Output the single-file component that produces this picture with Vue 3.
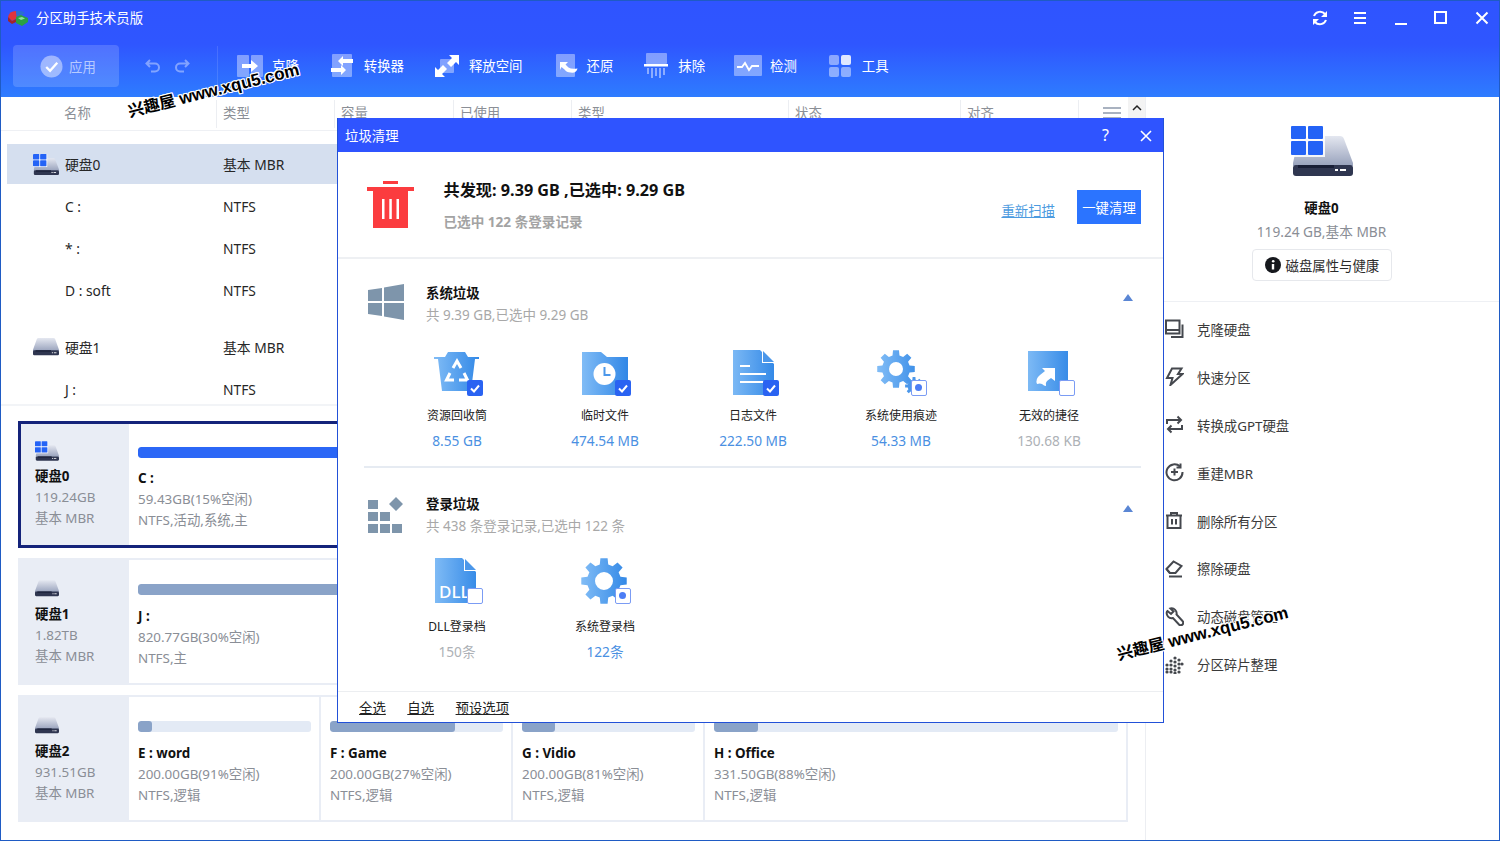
<script setup>
const columns = [
  { label: '名称', width: 215, first: true },
  { label: '类型', width: 118 },
  { label: '容量', width: 119 },
  { label: '已使用', width: 118 },
  { label: '类型', width: 217 },
  { label: '状态', width: 172 },
  { label: '对齐', width: 118 },
]

const rows = [
  { name: '硬盘0', type: '基本 MBR', icon: 'disk-win', selected: true },
  { name: 'C :', type: 'NTFS' },
  { name: '* :', type: 'NTFS' },
  { name: 'D : soft', type: 'NTFS' },
  { name: '硬盘1', type: '基本 MBR', icon: 'disk', gap: true },
  { name: 'J :', type: 'NTFS' },
]

const cards = [
  {
    name: '硬盘0', size: '119.24GB', icon: 'disk-win', selected: true,
    parts: [{ name: 'C :', size: '59.43GB(15%空闲)', info: 'NTFS,活动,系统,主', used: 100, color: 'blue', grow: 1 }],
  },
  {
    name: '硬盘1', size: '1.82TB', icon: 'disk',
    parts: [{ name: 'J :', size: '820.77GB(30%空闲)', info: 'NTFS,主', used: 100, grow: 1 }],
  },
  {
    name: '硬盘2', size: '931.51GB', icon: 'disk',
    parts: [
      { name: 'E : word', size: '200.00GB(91%空闲)', info: 'NTFS,逻辑', used: 8, width: 190 },
      { name: 'F : Game', size: '200.00GB(27%空闲)', info: 'NTFS,逻辑', used: 72, width: 192 },
      { name: 'G : Vidio', size: '200.00GB(81%空闲)', info: 'NTFS,逻辑', used: 19, width: 192 },
      { name: 'H : Office', size: '331.50GB(88%空闲)', info: 'NTFS,逻辑', used: 11, grow: 1 },
    ],
  },
]

const systemItems = [
  { label: '资源回收筒', value: '8.55 GB', icon: 'bin', state: 'checked' },
  { label: '临时文件', value: '474.54 MB', icon: 'folder', state: 'checked' },
  { label: '日志文件', value: '222.50 MB', icon: 'log', state: 'checked' },
  { label: '系统使用痕迹', value: '54.33 MB', icon: 'gears', state: 'partial' },
  { label: '无效的捷径', value: '130.68 KB', icon: 'shortcut', state: 'empty' },
]

const registryItems = [
  { label: 'DLL登录档', value: '150条', icon: 'dll', state: 'empty' },
  { label: '系统登录档', value: '122条', icon: 'gear', state: 'partial' },
]

const sections = [
  { title: '系统垃圾', sub: '共 9.39 GB,已选中 9.29 GB', icon: 'win', items: systemItems },
  { title: '登录垃圾', sub: '共 438 条登录记录,已选中 122 条', icon: 'blocks', items: registryItems },
]

const menu = [
  { label: '克隆硬盘', d: ['M1 1.500h13.500v13H1z', 'M1 11h13.500', 'M17.500 5.500v12.500H6'] },
  { label: '快速分区', d: ['M7 1.500h9.500L13 7h4.500L5.500 18 7.500 11H2z'] },
  { label: '转换成GPT硬盘', d: ['M2 9V5h14', 'M12.500 1.500L16 5l-3.500 3.500', 'M17 10v4H3', 'M6.500 10.500L3 14l3.500 3.500'] },
  { label: '重建MBR', d: ['M15 3.500A8 8 0 1 0 17.500 9', 'M15.500 .5v4h-4', 'M9.500 5.500v7', 'M6 9h7'] },
  { label: '删除所有分区', d: ['M1 4.500h16', 'M6 4.500V2h6v2.500', 'M2.500 4.500V17h13V4.500', 'M7 8v5.500', 'M11 8v5.500'] },
  { label: '擦除硬盘', d: ['M1.500 10l7-7.500 8 4.500-6 7H5z', 'M5 14.500l-3.500-4.500', 'M4 17.500h13'] },
  { label: '动态磁盘管理', d: ['M2.500 4l3.500 3 2.500-2.500L5.500 1.500a5 5 0 0 1 6 6l6 6.500a2.300 2.300 0 0 1-3.500 3.500l-6-6.500a5 5 0 0 1-6-6.500z'] },
  {
    label: '分区碎片整理',
    dots: true,
    d: ['M2 10h.01', 'M2 14h.01', 'M2 17h.01', 'M6 6h.01', 'M6 10h.01', 'M6 14h.01', 'M6 17h.01', 'M10 3h.01', 'M10 7h.01', 'M10 11h.01', 'M10 15h.01', 'M10 18h.01', 'M14 5h.01', 'M14 9h.01', 'M14 13h.01', 'M17 9h.01', 'M14 17h.01'],
  },
]

// builds a cog outline, used by the gear icons of the dialog
const gearPath = (cx, cy, outer, inner, hole, teeth = 8) => {
  const step = (Math.PI * 2) / teeth
  let d = ''
  for (let i = 0; i < teeth; i++) {
    const a = i * step - Math.PI / 2
    const pts = [
      [inner, a - step * 0.32],
      [outer, a - step * 0.2],
      [outer, a + step * 0.2],
      [inner, a + step * 0.32],
    ]
    pts.forEach(([r, t], j) => {
      const x = (cx + r * Math.cos(t)).toFixed(2)
      const y = (cy + r * Math.sin(t)).toFixed(2)
      d += `${i === 0 && j === 0 ? 'M' : 'L'}${x} ${y}`
    })
  }
  d += `Z M${cx - hole} ${cy}a${hole} ${hole} 0 1 0 ${hole * 2} 0a${hole} ${hole} 0 1 0 ${-hole * 2} 0Z`
  return d
}

const bigGear = gearPath(23, 23, 23, 17, 9)
const topGear = gearPath(19, 19, 19, 14, 7)
const smallGear = gearPath(37, 36, 9, 6.500, 0.01)
</script>

<template>
  <div class="app">
    <svg class="sprite" aria-hidden="true">
      <defs>
        <linearGradient id="bodyGrad" x1="0" y1="0" x2="0" y2="1">
          <stop offset="0" stop-color="#e4e7f0" />
          <stop offset="1" stop-color="#98a2bc" />
        </linearGradient>
        <linearGradient id="iconGrad" gradientUnits="userSpaceOnUse" x1="0" y1="0" x2="48" y2="0">
          <stop offset="0" stop-color="#82bdf6" />
          <stop offset="1" stop-color="#2f86e6" />
        </linearGradient>
      </defs>
      <symbol id="disk-win" viewBox="0 0 62 50">
        <path d="M8 10h41q3 0 4 3l9 24v3H2v-3z" fill="url(#bodyGrad)" />
        <rect x="2" y="39" width="60" height="11" rx="3" fill="#2f3650" />
        <rect x="7" y="39" width="36" height="3" fill="#181e36" />
        <rect x="44" y="43" width="3" height="2" fill="#fff" />
        <rect x="49" y="43" width="6" height="2" fill="#fff" />
        <rect x="0" y="0" width="34" height="31" fill="#fff" opacity=".85" />
        <rect x="0" y="0" width="15" height="13" rx="1" fill="#2463f6" />
        <rect x="17" y="0" width="15" height="13" rx="1" fill="#2463f6" />
        <rect x="0" y="15" width="15" height="14" rx="1" fill="#2463f6" />
        <rect x="17" y="15" width="15" height="14" rx="1" fill="#2463f6" />
      </symbol>
      <symbol id="disk" viewBox="0 8 62 42">
        <path d="M13 9h36q3 0 4 3l9 25v3H0v-3l9-25q1-3 4-3z" fill="url(#bodyGrad)" />
        <rect x="0" y="38" width="62" height="12" rx="3" fill="#2f3650" />
        <rect x="6" y="38" width="37" height="3" fill="#181e36" />
        <rect x="45" y="43" width="3" height="2" fill="#fff" />
        <rect x="50" y="43" width="6" height="2" fill="#fff" />
      </symbol>
      <symbol id="bin" viewBox="0 0 48 46">
        <path d="M1 7h11l3-5h17l3 5h11v2h-4l-4 32H9L5 9H1z" fill="url(#iconGrad)" />
        <path d="M20 18l4-7 4 7M31 23l3.500 7H26M21 30h-7.500l3.500-7" fill="none" stroke="#fff" stroke-width="3" />
      </symbol>
      <symbol id="folder" viewBox="0 0 48 46">
        <path d="M1 2h19l6 5h21v38H1z" fill="url(#iconGrad)" />
        <circle cx="23.500" cy="24" r="11" fill="#fff" />
        <path d="M23.500 17v8h6" fill="none" stroke="#4b97ea" stroke-width="2" />
      </symbol>
      <symbol id="log" viewBox="0 0 48 46">
        <path d="M4 0h27l14 14v31H4z" fill="url(#iconGrad)" />
        <path d="M33 0l12 13H33z" fill="#fff" />
        <path d="M34 1l11 11H34z" fill="#4b97ea" />
        <rect x="11" y="15" width="10" height="2" fill="#fff" />
        <rect x="11" y="23" width="26" height="2" fill="#fff" />
        <rect x="11" y="31" width="26" height="2" fill="#fff" />
      </symbol>
      <symbol id="gears" viewBox="0 0 48 46">
        <path :d="topGear" fill="url(#iconGrad)" fill-rule="evenodd" />
        <path :d="smallGear" fill="#4b97ea" />
      </symbol>
      <symbol id="gear" viewBox="0 0 48 46">
        <path :d="bigGear" fill="url(#iconGrad)" fill-rule="evenodd" />
      </symbol>
      <symbol id="shortcut" viewBox="0 0 48 46">
        <rect x="3" y="1" width="40" height="40" fill="url(#iconGrad)" />
        <path d="M12 34q-2-5 3-9l5-4-3-3h13v13l-4-3-4 3q-2 2-1 5-2 0-4-2-2-1-5 0z" fill="#fff" />
      </symbol>
      <symbol id="dll" viewBox="0 0 48 46">
        <path d="M2 0h27l14 14v31H2z" fill="url(#iconGrad)" />
        <path d="M31 0l12 13H31z" fill="#fff" />
        <path d="M32 1l11 11H32z" fill="#4b97ea" />
      </symbol>
    </svg>

    <header class="head">
      <div class="title-row">
        <svg class="logo" viewBox="0 0 20 16" width="20" height="16">
          <path d="M0 7q1-6 8-6l1 7-5 3z" fill="#e0343c" />
          <path d="M8 1q5-1 9 2l-4 3-4 1z" fill="#2a6fd0" />
          <path d="M8 7l5-2 7 3v4l-6 4-6-3z" fill="#2aa043" />
          <path d="M10 8l4-1 3 1.500-4 1.500z" fill="#8fe0a0" />
          <path d="M0 7l4 4 4-2v3l-4 2-4-3z" fill="#a3242c" />
        </svg>
        <span class="app-name">分区助手技术员版</span>
        <div class="win-btns">
          <svg viewBox="0 0 18 18" class="win-btn"><path d="M3 7a6.500 6.500 0 0 1 11-2M15 11a6.500 6.500 0 0 1-11 2" fill="none" stroke="#fff" stroke-width="2" /><path d="M16 2v6h-6zM2 16v-6h6z" fill="#fff" /></svg>
          <svg viewBox="0 0 18 18" class="win-btn"><path d="M3 4h12M3 9h12M3 14h12" stroke="#fff" stroke-width="2" /></svg>
          <svg viewBox="0 0 18 18" class="win-btn"><path d="M3 15h12" stroke="#fff" stroke-width="2" /></svg>
          <svg viewBox="0 0 18 18" class="win-btn"><rect x="3" y="3" width="11" height="11" fill="none" stroke="#fff" stroke-width="2" /></svg>
          <svg viewBox="0 0 18 18" class="win-btn"><path d="M3.500 3.500l11 11M14.500 3.500l-11 11" stroke="#fff" stroke-width="2" /></svg>
        </div>
      </div>
      <div class="toolbar">
        <button class="apply">
          <svg viewBox="0 0 24 24" width="23" height="23"><circle cx="12" cy="12" r="11.500" fill="#fff" opacity=".45" /><path d="M6.500 12.500l4 4 7.500-8.500" fill="none" stroke="#fff" stroke-width="2.400" /></svg>
          <span>应用</span>
        </button>
        <div class="history">
          <svg viewBox="0 0 16 14" width="16" height="14"><path d="M5 1L1.500 4.500 5 8M2 4.500h8a3.800 3.800 0 0 1 0 8H6" fill="none" stroke="#fff" stroke-opacity=".4" stroke-width="2" /></svg>
          <svg viewBox="0 0 16 14" width="16" height="14"><path d="M11 1l3.500 3.500L11 8M14 4.500H6a3.800 3.800 0 0 0 0 8h4" fill="none" stroke="#fff" stroke-opacity=".4" stroke-width="2" /></svg>
        </div>
        <div class="tool-sep"></div>
        <div class="tools">
          <div class="tool">
            <svg viewBox="0 0 26 24" width="26" height="24"><rect y="1" width="12" height="22" rx="1" fill="#fff" opacity=".4" /><rect x="14" y="1" width="12" height="22" rx="1" fill="#fff" opacity=".4" /><path d="M5 10h9V6l7 6-7 6v-4H5z" fill="#fff" /></svg>
            <span>克隆</span>
          </div>
          <div class="tool">
            <svg viewBox="0 0 22 24" width="22" height="24"><rect x="1" width="20" height="23" rx="1" fill="#fff" opacity=".4" /><path d="M12 2v3h10v4H12v3L7 7zM10 11v3h-10v4h10v3l5-5z" fill="#fff" /></svg>
            <span>转换器</span>
          </div>
          <div class="tool">
            <svg viewBox="0 0 24 24" width="24" height="24"><rect x="5" y="5" width="14" height="14" rx="1" fill="#fff" opacity=".4" /><path d="M14 1h10v10l-3-3-5 5-4-4 5-5zM10 23H0V13l3 3 5-5 4 4-5 5z" fill="#fff" /></svg>
            <span>释放空间</span>
          </div>
          <div class="tool">
            <svg viewBox="0 0 22 24" width="22" height="24"><rect width="19" height="23" rx="1" fill="#fff" opacity=".4" /><path d="M4 8h8l-2.500 2.500 3 3q3 2 9 1-1 5-7 4-4 0-6-3L5.500 13 4 16z" fill="#fff" /></svg>
            <span>还原</span>
          </div>
          <div class="tool">
            <svg viewBox="0 0 24 26" width="24" height="26"><rect x="2" width="21" height="11" rx="1" fill="#fff" opacity=".4" /><rect y="11" width="24" height="2.500" fill="#fff" /><path d="M3 15h2v6H3zM7 15h2v10H7zM11 15h2v8h-2zM15 15h2v10h-2zM19 15h2v7h-2z" fill="#fff" opacity=".45" /></svg>
            <span>抹除</span>
          </div>
          <div class="tool">
            <svg viewBox="0 0 28 22" width="28" height="22"><rect width="28" height="21" rx="1" fill="#fff" opacity=".4" /><path d="M3 12h5l3-4 4 7 3-4h7" fill="none" stroke="#fff" stroke-width="1.800" /></svg>
            <span>检测</span>
          </div>
          <div class="tool">
            <svg viewBox="0 0 22 22" width="22" height="22"><rect width="10" height="10" rx="2" fill="#fff" opacity=".45" /><rect x="12" width="10" height="10" rx="2" fill="#fff" opacity=".85" /><rect y="12" width="10" height="10" rx="2" fill="#fff" opacity=".45" /><rect x="12" y="12" width="10" height="10" rx="2" fill="#fff" opacity=".45" /></svg>
            <span>工具</span>
          </div>
        </div>
      </div>
    </header>

    <div class="body">
      <main class="content">
        <div class="table-head">
          <div v-for="(col, i) in columns" :key="i" class="col" :class="{ 'col-first': col.first }" :style="{ width: col.width + 'px' }">{{ col.label }}</div>
          <div class="col col-tools">
            <svg viewBox="0 0 18 14" width="18" height="14"><path d="M0 2h18M0 7h18M0 12h18" stroke="#a9b2c0" stroke-width="2" /></svg>
          </div>
        </div>
        <div class="scrollbar">
          <svg viewBox="0 0 10 7" width="10" height="7"><path d="M1 6l4-4 4 4" fill="none" stroke="#222" stroke-width="1.500" /></svg>
          <span class="thumb"></span>
        </div>

        <div class="list">
          <div v-for="row in rows" :key="row.name" class="row" :class="{ 'row-selected': row.selected, 'row-gap': row.gap }">
            <div class="row-name" :class="{ 'row-name-icon': row.icon }">
              <svg v-if="row.icon" class="row-icon"><use :href="'#' + row.icon" /></svg>
              {{ row.name }}
            </div>
            <div class="row-type">{{ row.type }}</div>
          </div>
        </div>

        <div class="cards">
          <div v-for="card in cards" :key="card.name" class="card" :class="{ 'card-selected': card.selected }">
            <div class="card-disk">
              <svg class="card-icon"><use :href="'#' + card.icon" /></svg>
              <div class="card-name">{{ card.name }}</div>
              <div class="card-text">{{ card.size }}</div>
              <div class="card-text">基本 MBR</div>
            </div>
            <div
              v-for="part in card.parts"
              :key="part.name"
              class="part"
              :style="part.width ? { width: part.width + 'px' } : { flex: part.grow }"
            >
              <div class="bar">
                <div class="bar-fill" :class="part.color" :style="{ width: part.used + '%' }"></div>
              </div>
              <div class="part-name">{{ part.name }}</div>
              <div class="card-text">{{ part.size }}</div>
              <div class="card-text">{{ part.info }}</div>
            </div>
          </div>
        </div>
      </main>

      <aside class="side">
        <div class="side-top">
          <svg class="side-disk"><use href="#disk-win" /></svg>
          <div class="side-name">硬盘0</div>
          <div class="side-size">119.24 GB,基本 MBR</div>
          <button class="health">
            <svg viewBox="0 0 16 16" width="16" height="16"><circle cx="8" cy="8" r="8" fill="#16181d" /><circle cx="8.200" cy="4.200" r="1.300" fill="#fff" /><path d="M6.800 7h2.400v5.500H6.800z" fill="#fff" /></svg>
            磁盘属性与健康
          </button>
        </div>
        <ul class="menu">
          <li v-for="item in menu" :key="item.label">
            <svg viewBox="0 0 19 19" width="19" height="19" fill="none" stroke="#45484e" :stroke-width="item.dots ? 3.200 : 2" :stroke-linecap="item.dots ? 'round' : 'butt'">
              <path v-for="d in item.d" :key="d" :d="d" />
            </svg>
            <span>{{ item.label }}</span>
          </li>
        </ul>
      </aside>
    </div>

    <section class="dialog">
      <div class="dlg-title">
        <span>垃圾清理</span>
        <span class="dlg-help">?</span>
        <svg class="dlg-close" viewBox="0 0 12 12" width="12" height="12"><path d="M1 1l10 10M11 1L1 11" stroke="#fff" stroke-width="1.600" /></svg>
      </div>
      <div class="dlg-summary">
        <svg viewBox="0 0 47 47" width="47" height="47">
          <path d="M16 0h15v3H16zM0 6h47v4H0zM6 10h35v37H6z" fill="#fb3c3f" />
          <path d="M15 18h2.500v20H15zM22.300 18h2.500v20h-2.500zM29.500 18h2.500v20h-2.500z" fill="#fff" />
        </svg>
        <div class="sum-text">
          <div class="sum-title">共发现: 9.39 GB ,已选中: 9.29 GB</div>
          <div class="sum-sub">已选中 122 条登录记录</div>
        </div>
        <a class="rescan">重新扫描</a>
        <button class="clean">一键清理</button>
      </div>

      <div class="dlg-body">
        <div v-for="section in sections" :key="section.title" class="section">
          <div class="sec-head">
            <svg v-if="section.icon === 'win'" viewBox="0 0 36 36" width="36" height="36">
              <path d="M0 6l14-2v13H0zM16 3.500L36 0v17H16zM0 19h14v13L0 30zM16 19h20v17l-20-3.500z" fill="#7e95ab" />
            </svg>
            <svg v-else viewBox="0 0 36 36" width="36" height="36">
              <path d="M0 3h10v9H0zM0 15h10v9H0zM12 15h10v9H12zM0 27h10v9H0zM12 27h10v9H12zM24 27h10v9H24zM28 0l7 7-7 7-7-7z" fill="#7e95ab" />
            </svg>
            <div class="sec-text">
              <div class="sec-title">{{ section.title }}</div>
              <div class="sec-sub">{{ section.sub }}</div>
            </div>
            <span class="sec-arrow"></span>
          </div>
          <div class="items">
            <div v-for="item in section.items" :key="item.label" class="item">
              <div class="item-icon">
                <svg width="48" height="46"><use :href="'#' + item.icon" /></svg>
                <span v-if="item.icon === 'dll'" class="dll-text">DLL</span>
                <span class="badge" :class="'badge-' + item.state">
                  <svg v-if="item.state === 'checked'" viewBox="0 0 14 14" width="14" height="14"><path d="M3 7.500l3 3 5-6" fill="none" stroke="#fff" stroke-width="2" /></svg>
                </span>
              </div>
              <div class="item-label">{{ item.label }}</div>
              <div class="item-value" :class="{ 'item-off': item.state === 'empty' }">{{ item.value }}</div>
            </div>
          </div>
        </div>
      </div>

      <div class="dlg-foot">
        <a>全选</a>
        <a>自选</a>
        <a>预设选项</a>
      </div>
    </section>

    <div class="mark mark-top">兴趣屋 <b>www.xqu5.com</b></div>
    <div class="mark mark-side">兴趣屋 <b>www.xqu5.com</b></div>
  </div>
</template>

<style>
html,
body {
  margin: 0;
}
</style>

<style scoped>
.app {
  position: relative;
  box-sizing: border-box;
  width: 1500px;
  height: 841px;
  overflow: hidden;
  border: 1px solid #1f5bc4;
  background: #fff;
  color: #2b2b2b;
  font-family: 'Noto Sans', 'Noto Sans CJK SC', sans-serif;
  font-size: 13.4px;
}

.sprite {
  position: absolute;
  width: 0;
  height: 0;
}

.head {
  height: 96px;
  background: linear-gradient(#2f54ff 0%, #2f56ff 45%, #2e7cff 100%);
  color: #fff;
}

.title-row {
  display: flex;
  align-items: center;
  box-sizing: border-box;
  height: 34px;
  padding-left: 7px;
}

.logo {
  margin-right: 8px;
}

.app-name {
  margin-top: -3px;
}

.win-btns {
  display: flex;
  gap: 22.600px;
  margin-left: auto;
  margin-right: 8px;
}

.win-btn {
  width: 18px;
  height: 18px;
}

.toolbar {
  display: flex;
  align-items: center;
  height: 62px;
  padding-left: 12px;
}

.apply {
  display: flex;
  align-items: center;
  gap: 6px;
  box-sizing: border-box;
  width: 106px;
  height: 42px;
  padding: 0 0 0 27px;
  border: 0;
  border-radius: 4px;
  background: rgba(255, 255, 255, 0.16);
  color: rgba(255, 255, 255, 0.6);
  font: inherit;
}

.history {
  display: flex;
  gap: 13px;
  margin-left: 26px;
}

.tool-sep {
  width: 1px;
  height: 40px;
  margin-left: 27px;
  background: rgba(255, 255, 255, 0.12);
}

.tools {
  display: flex;
  gap: 31px;
  margin-left: 19px;
}

.tool {
  display: flex;
  align-items: center;
  gap: 9px;
}

.tool span {
  margin-top: -2px;
}

.tool:nth-child(2) {
  gap: 11px;
  margin-left: 1px;
}

.tool:nth-child(3) {
  gap: 10px;
}

.tool:nth-child(4) {
  margin-left: 2px;
}

.tool:nth-child(5) {
  gap: 10px;
}

.tool:nth-child(6) {
  gap: 8px;
  margin-left: -2px;
}

.tool:nth-child(7) {
  gap: 11px;
  margin-left: 1px;
}

.body {
  display: flex;
  height: 743px;
}

.content {
  position: relative;
  width: 1144px;
  flex: none;
  border-right: 1px solid #eceef2;
}

.table-head {
  display: flex;
  height: 33px;
  align-items: center;
  border-bottom: 1px solid #eef0f4;
  color: #8b8f96;
}

.col {
  box-sizing: border-box;
  flex: none;
  height: 28px;
  line-height: 27px;
  padding-left: 6px;
  border-left: 1px solid #eceef2;
}

.col-first {
  padding-left: 63px;
  border-left: 0;
}

.col-tools {
  padding-left: 24px;
}

.col-tools svg {
  margin-top: 6px;
}

.scrollbar {
  position: absolute;
  top: 0;
  right: 0;
  display: flex;
  flex-direction: column;
  align-items: center;
  gap: 7px;
  box-sizing: border-box;
  width: 17px;
  height: 40px;
  padding-top: 7px;
  background: #f3f3f3;
}

.thumb {
  width: 100%;
  height: 16px;
  background: #cdcdcd;
}

.list {
  box-sizing: border-box;
  height: 275px;
  padding-top: 13px;
  overflow: hidden;
  border-bottom: 2px solid #f2f4f7;
  font-size: 13.800px;
}

.row {
  display: flex;
  align-items: center;
  height: 42.400px;
  margin-right: 16px;
  margin-left: 6px;
}

.row-selected {
  height: 40px;
  margin-bottom: 1px;
  background: #d5dfef;
}

.row-gap {
  margin-top: 13.500px;
}

.row-name {
  display: flex;
  align-items: center;
  gap: 6px;
  width: 216px;
  box-sizing: border-box;
  padding-left: 58px;
  color: #262626;
}

.row-name-icon {
  padding-left: 26px;
}

.row-icon {
  width: 26px;
  height: 21px;
}

.row-type {
  color: #262626;
}

.cards {
  display: flex;
  flex-direction: column;
  gap: 10px;
  padding: 15px 17px 0;
}

.card {
  display: flex;
  box-sizing: border-box;
  height: 127px;
  border: 2px solid #e9edf5;
}

.card-selected {
  border: 3px solid #14237a;
}

.card-disk {
  box-sizing: border-box;
  flex: none;
  width: 109px;
  padding: 18px 0 0 15px;
  background: #e9edf5;
}

.card-selected .card-disk {
  width: 108px;
  padding-top: 17px;
  padding-left: 14px;
}

.card-icon {
  display: block;
  width: 24px;
  height: 20px;
}

.card-name,
.part-name {
  color: #111;
  font-weight: 700;
  line-height: 22px;
}

.card-name {
  margin-top: 5px;
}

.card-selected .card-name {
  margin-top: 4px;
}

.card-text {
  color: #8a8e96;
  line-height: 21.300px;
  white-space: nowrap;
}

.part {
  box-sizing: border-box;
  min-width: 0;
  padding: 24px 8px 0 9px;
  border-left: 2px solid #e9edf5;
}

.card-disk + .part {
  border-left: 0;
}

.card-selected .part {
  padding-top: 23px;
}

.bar {
  height: 10.500px;
  border-radius: 3px;
  overflow: hidden;
  background: #e3eaf5;
}

.bar-fill {
  height: 100%;
  border-radius: 3px;
  background: #8aa3c8;
}

.bar-fill.blue {
  background: #2b67f6;
}

.part-name {
  margin-top: 10px;
}

.card-selected .part-name {
  margin-top: 9px;
}

.side {
  flex: 1;
}

.side-top {
  display: flex;
  flex-direction: column;
  align-items: center;
  height: 205px;
  box-sizing: border-box;
  padding: 29px 2px 0 0;
  border-bottom: 1px solid #eef0f4;
}

.side-disk {
  width: 62px;
  height: 50px;
}

.side-name {
  margin-top: 21px;
  color: #111;
  font-weight: 700;
  line-height: 22px;
}

.side-size {
  margin-top: 2px;
  color: #8a8e96;
  font-size: 13.700px;
  line-height: 22px;
}

.health {
  display: flex;
  align-items: center;
  gap: 5px;
  box-sizing: border-box;
  width: 140px;
  height: 32px;
  margin-top: 6px;
  padding: 0 0 0 12px;
  border: 1px solid #e6e8ec;
  border-radius: 4px;
  background: #fff;
  color: #2b2b2b;
  font: inherit;
}

.menu {
  margin: 3px 0 0;
  padding: 0 0 0 19px;
  list-style: none;
}

.menu li {
  display: flex;
  align-items: center;
  gap: 13px;
  height: 47.900px;
  color: #3a3a3a;
}

.dialog {
  position: absolute;
  top: 117px;
  left: 336px;
  z-index: 5;
  display: flex;
  flex-direction: column;
  box-sizing: border-box;
  width: 827px;
  height: 605px;
  border: 1px solid #2251d8;
  border-top: 0;
  background: #fff;
}

.dlg-title {
  display: flex;
  align-items: center;
  flex: none;
  height: 34px;
  padding: 0 11px 0 7px;
  background: #2f54ff;
  color: #fff;
}

.dlg-help {
  margin-right: 31px;
  margin-left: auto;
  font-size: 16px;
}

.dlg-close {
  margin-top: 1px;
}

.dlg-summary {
  display: flex;
  align-items: center;
  flex: none;
  box-sizing: border-box;
  height: 107px;
  padding: 0 22px 0 29px;
  border-bottom: 2px solid #eef0f3;
}

.sum-text {
  margin-top: 2px;
  margin-left: 29.500px;
}

.sum-title {
  color: #111;
  font-size: 16.200px;
  font-weight: 700;
  line-height: 24px;
}

.sum-sub {
  margin-top: 9px;
  color: #a3a3a3;
  font-size: 13.600px;
  font-weight: 700;
  line-height: 22px;
}

.rescan {
  margin-top: 11px;
  margin-left: auto;
  color: #4c9be0;
  text-decoration: underline;
}

.clean {
  width: 64px;
  height: 34px;
  margin-top: 4px;
  margin-left: 22px;
  padding: 0;
  border: 0;
  background: #2b74ff;
  color: #fff;
  font: inherit;
}

.dlg-body {
  flex: 1;
  padding: 0 22px 0 26px;
}

.section {
  padding-top: 27px;
}

.section:first-child {
  height: 209px;
  box-sizing: border-box;
  padding-top: 25px;
  border-bottom: 2px solid #e6ebf2;
}

.sec-head {
  display: flex;
  align-items: flex-start;
  padding-left: 4px;
}

.section:last-child .sec-head > svg {
  margin-top: 2px;
}

.sec-text {
  margin-top: -2px;
  margin-left: 22px;
}

.sec-title {
  color: #111;
  font-weight: 700;
  line-height: 22px;
}

.sec-sub {
  color: #a8a8a8;
  font-size: 13.500px;
  line-height: 22px;
}

.sec-arrow {
  width: 0;
  height: 0;
  margin-top: 10px;
  margin-right: 8px;
  margin-left: auto;
  border-right: 5.500px solid transparent;
  border-bottom: 7px solid #5a86d4;
  border-left: 5.500px solid transparent;
}

.items {
  display: flex;
  gap: 28px;
  margin-top: 24px;
  margin-left: 33px;
}

.section:last-child .items {
  margin-top: 21px;
}

.section:last-child .item-label {
  margin-top: 13px;
}

.section:last-child .item-value {
  margin-top: 5px;
}

.item {
  display: flex;
  flex-direction: column;
  align-items: center;
  width: 120px;
}

.item-icon {
  position: relative;
  width: 48px;
  height: 46px;
}

.item-icon svg {
  display: block;
}

.badge {
  position: absolute;
  right: -2px;
  bottom: 0;
  box-sizing: border-box;
  width: 16px;
  height: 16px;
  border: 1.500px solid #7b9cf4;
  border-radius: 2px;
  background: #fff;
}

.badge-checked {
  border: 0;
  background: #2a63f2;
}

.badge-checked svg {
  margin: 1px;
}

.badge-partial::after {
  content: '';
  position: absolute;
  top: 3px;
  left: 3px;
  width: 7px;
  height: 7px;
  border-radius: 50%;
  background: #4c7df5;
}

.dll-text {
  position: absolute;
  left: 6px;
  bottom: 0;
  color: #fff;
  font-size: 17px;
  font-weight: 500;
  line-height: 24px;
}

.item-label {
  margin-top: 10px;
  color: #222;
  font-size: 12px;
  line-height: 20px;
}

.item-value {
  margin-top: 5px;
  color: #4a90e2;
  font-size: 13.700px;
  line-height: 20px;
}

.item-off {
  color: #adb1b6;
}

.dlg-foot {
  display: flex;
  gap: 21.500px;
  flex: none;
  align-items: center;
  height: 30px;
  padding-left: 21px;
  border-top: 1px solid #eceef1;
  color: #222;
}

.dlg-foot a {
  text-decoration: underline;
}

.mark {
  position: absolute;
  z-index: 8;
  color: #000;
  font-family: 'Liberation Sans', 'Noto Sans CJK SC', sans-serif;
  font-size: 16px;
  font-weight: 700;
  white-space: nowrap;
  transform: rotate(-14deg);
  transform-origin: left bottom;
  text-shadow: -1px 0 #fff, 1px 0 #fff, 0 -1px #fff, 0 1px #fff, 1px 1px #fff, -1px -1px #fff, 1px -1px #fff, -1px 1px #fff;
}

.mark b {
  font-size: 17px;
}

.mark-top {
  top: 97px;
  left: 130px;
}

.mark-side {
  top: 640px;
  left: 1119px;
}
</style>
